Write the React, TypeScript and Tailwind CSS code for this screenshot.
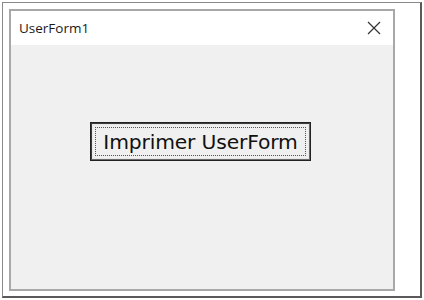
import React from 'react';

const App: React.FC = () => {
  return (
    <div className="w-[424px] h-[300px] bg-white p-[2px]">
      {/* Outer frame */}
      <div className="w-[420px] h-[296px] border border-[#8a8a8a] border-r-2 border-b-2 border-r-[#5a5a5a] border-b-[#5a5a5a] pl-[6px] pt-[6px]">
        {/* Window */}
        <div className="w-[386px] h-[282px] border-2 border-[#a8a8a8] flex flex-col">
          {/* Title bar */}
          <div className="h-[34px] bg-white flex items-center justify-between pl-[8px] pr-[12px]">
            <span className="text-[13.5px] text-[#1a1a1a] font-['Open_Sans','DejaVu_Sans',sans-serif]">UserForm1</span>
            <svg width="14" height="14" viewBox="0 0 14 14" className="mb-[1px]">
              <path d="M1 1 L13 13 M13 1 L1 13" stroke="#333" strokeWidth="1.2" fill="none" />
            </svg>
          </div>
          {/* Client area */}
          <div className="flex-1 bg-[#f0f0f0] pt-[77px] pl-[79px]">
            <div className="w-[221px] h-[39px] border border-[#222] bg-[#f0f0f0]">
              <div className="w-full h-full border border-[#6a6a6a] border-t-[#3c3c3c] border-l-[#3c3c3c]">
                <div className="w-full h-full border border-[#e8e8e8] p-[2px]">
                  <div className="w-full h-full border border-dotted border-[#555] flex items-center justify-center pt-[1px]">
                    <span className="text-[20.3px] leading-none text-[#111] font-['DejaVu_Sans',sans-serif] tracking-[-0.15px]">
                      Imprimer UserForm
                    </span>
                  </div>
                </div>
              </div>
            </div>
          </div>
        </div>
      </div>
    </div>
  );
};

export default App;
